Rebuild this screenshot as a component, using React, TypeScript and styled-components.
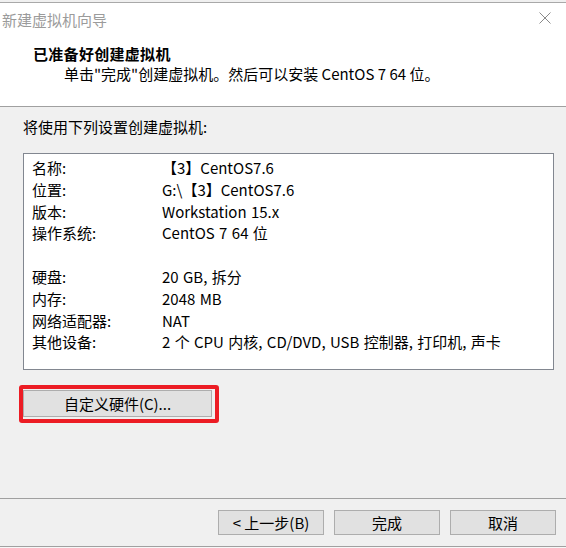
import React from "react";
import styled, { createGlobalStyle } from "styled-components";

const GlobalStyle = createGlobalStyle`
  html, body {
    margin: 0;
    padding: 0;
    background: #f0f0f0;
  }
  * {
    box-sizing: border-box;
  }
`;

const FONT = `"Noto Sans CJK SC", "Noto Sans", sans-serif`;

interface Row {
  label: string;
  value: string;
}

const rows: (Row | null)[] = [
  { label: "名称:", value: "【3】CentOS7.6" },
  { label: "位置:", value: "G:\\【3】CentOS7.6" },
  { label: "版本:", value: "Workstation 15.x" },
  { label: "操作系统:", value: "CentOS 7 64 位" },
  null,
  { label: "硬盘:", value: "20 GB, 拆分" },
  { label: "内存:", value: "2048 MB" },
  { label: "网络适配器:", value: "NAT" },
  { label: "其他设备:", value: "2 个 CPU 内核, CD/DVD, USB 控制器, 打印机, 声卡" },
];

const App = () => {
  return (
    <>
      <GlobalStyle />
      <Wizard>
        <Header>
          <TitleBar>
            <WindowTitle>新建虚拟机向导</WindowTitle>
            <CloseIcon width="12" height="12" viewBox="0 0 12 12">
              <path d="M0.5 0.5 L11.5 11.5 M11.5 0.5 L0.5 11.5" stroke="#8a8a8a" strokeWidth="1" fill="none" />
            </CloseIcon>
          </TitleBar>
          <Heading>已准备好创建虚拟机</Heading>
          <SubHeading>单击"完成"创建虚拟机。然后可以安装 CentOS 7 64 位。</SubHeading>
        </Header>

        <Body>
          <Intro>将使用下列设置创建虚拟机:</Intro>
          <SummaryBox>
            {rows.map((row, i) =>
              row ? (
                <SummaryRow key={i}>
                  <Label>{row.label}</Label>
                  <Value>{row.value}</Value>
                </SummaryRow>
              ) : (
                <SummaryRow key={i} />
              )
            )}
          </SummaryBox>
          <Highlight>
            <Button $width={189} $height={27}>自定义硬件(C)...</Button>
          </Highlight>
        </Body>

        <Footer>
          <Button $width={106} $height={25}>&lt; 上一步(B)</Button>
          <Button $width={106} $height={25}>完成</Button>
          <Button $width={106} $height={25}>取消</Button>
        </Footer>
      </Wizard>
    </>
  );
};

export default App;

const Wizard = styled.div`
  width: 566px;
  height: 548px;
  display: flex;
  flex-direction: column;
  background: #f0f0f0;
  font-family: ${FONT};
  font-size: 15px;
  color: #000;
  padding-top: 2px;
  border-bottom: 1px solid #f7f7f7;
`;

const Header = styled.div`
  background: #fff;
  border-top: 1px solid #a9a9a9;
  border-bottom: 1px solid #a0a0a0;
  height: 105px;
  display: flex;
  flex-direction: column;
`;

const TitleBar = styled.div`
  height: 33px;
  display: flex;
  align-items: center;
  justify-content: space-between;
  padding: 0 15px 0 2px;
`;

const WindowTitle = styled.span`
  color: #9b9b9b;
  font-size: 15px;
  line-height: 20px;
`;

const CloseIcon = styled.svg`
  display: block;
  margin-top: -3px;
`;

const Heading = styled.div`
  padding-left: 33px;
  margin-top: 8px;
  font-size: 15px;
  font-weight: 700;
  letter-spacing: 0.3px;
  line-height: 20px;
`;

const SubHeading = styled.div`
  padding-left: 64px;
  line-height: 20px;
  margin-top: 0px;
`;

const Body = styled.div`
  flex: 1;
  padding: 0 12px 0 23px;
  display: flex;
  flex-direction: column;
`;

const Intro = styled.div`
  margin-top: 10px;
  line-height: 20px;
`;

const SummaryBox = styled.div`
  margin-top: 16px;
  width: 531px;
  height: 217px;
  background: #fff;
  border: 1px solid #828790;
  padding: 3px 8px 0 8px;
`;

const SummaryRow = styled.div`
  display: grid;
  grid-template-columns: 130px 1fr;
  height: 21.8px;
  line-height: 21.8px;
  white-space: nowrap;
  word-spacing: 1px;
`;

const Label = styled.span``;

const Value = styled.span``;

const Highlight = styled.div`
  margin-top: 15px;
  margin-left: -4px;
  width: 200px;
  height: 38px;
  border: 4px solid #ec1c24;
  border-radius: 3px;
  padding: 1px 0 0 0;
`;

const Button = styled.button<{ $width: number; $height: number }>`
  width: ${(p) => p.$width}px;
  height: ${(p) => p.$height}px;
  background: #e1e1e1;
  border: 1px solid #adadad;
  border-radius: 0;
  padding: 0;
  margin: 0;
  font-family: ${FONT};
  font-size: 15px;
  color: #000;
  display: flex;
  align-items: center;
  justify-content: center;
`;

const Footer = styled.div`
  height: 49px;
  border-top: 1px solid #a0a0a0;
  border-bottom: 1px solid #a0a0a0;
  display: flex;
  justify-content: flex-end;
  align-items: flex-start;
  gap: 10px;
  padding: 11px 10px 0 0;
`;
